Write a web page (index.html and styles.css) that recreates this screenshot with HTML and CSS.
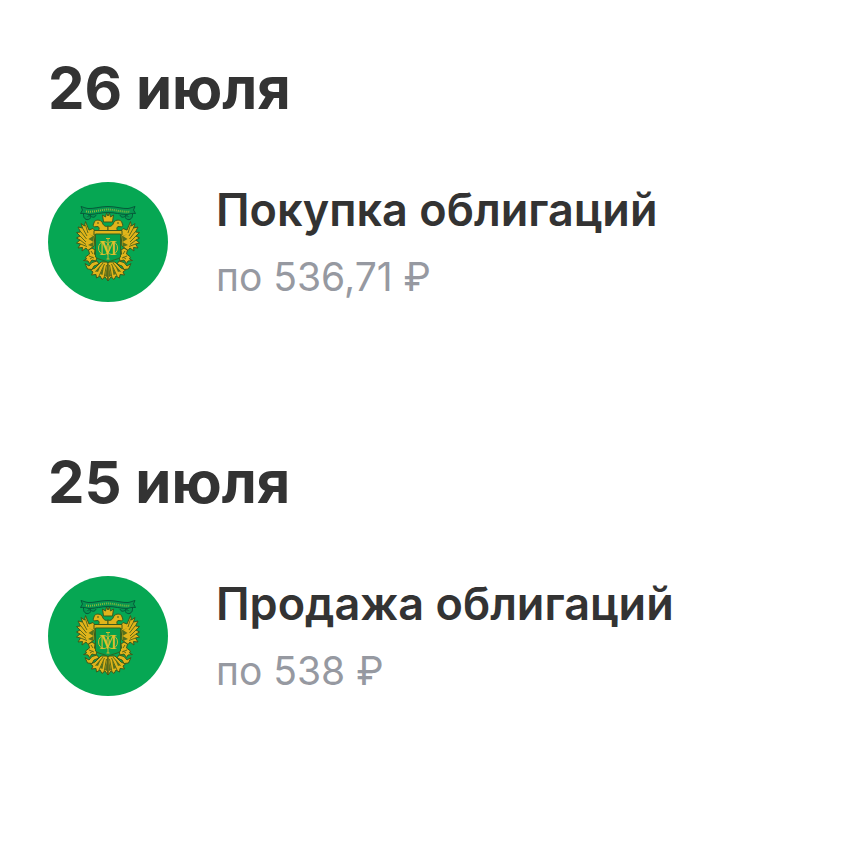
FILE: index.html
```html
<!DOCTYPE html>
<html lang="ru">
<head>
    <meta charset="UTF-8">
    <meta name="viewport" content="width=device-width, initial-scale=1">
    <title>История операций</title>
    <link rel="stylesheet" href="styles.css">
</head>
<body>

<svg class="sprite" aria-hidden="true">
    <defs>
        <!-- left half of the emblem, mirrored for the right one -->
        <g id="crest-half">
            <!-- ribbon -->
            <path class="ribbon" d="M60 24.500C52 24.500 45 27 40 26.500C37 26 35 25 33 24.500L34.500 28L32.500 31.500C36 31 38 32 41 32.500C48 32.500 53 30.500 60 30.500"/>
            <path class="ribbon" d="M35.500 32C35 36 38 39 41.500 37C44 35 42 32.500 39.500 34.500"/>
            <path class="ribbon" d="M42 33C44 36 47 36 48 33"/>
            <!-- head -->
            <path class="gold" d="M45 43.500L46.500 39.500C49 37 53.500 38 54.500 41C55.500 44 58 45 60 44V50H48C51.500 48.500 52 46 50 44.500L46.500 44.800Z"/>
            <circle class="dot" cx="50" cy="41" r="0.800"/>
            <!-- wing -->
            <path class="gold" d="M49 51L45 46.500L41 48L37.500 39.500L36.500 44L33 41.500L34.500 46L30 45L32.500 50L28.500 50.500L32 54L28.500 56L32 58L28.500 61L32.500 62L30 66L34.500 65.500L34 69L38 66L40 68.500L46 64L47 53Z"/>
            <path class="line" d="M37.500 43L40 51M34.500 46L39 54M33 50L38.500 57M32 54L38 60M32 58L38 62.500M32.500 62L39 64.500"/>
            <path class="leaf" d="M40 52L45 54L40.500 57L45.500 60L40 63L45 65L46 54Z"/>
            <!-- supporter -->
            <path class="gold" d="M44 66L40.500 68L41.500 72L37.500 75L38.500 77L35.500 78.500L40 79L41.500 81.500L44 78L48 79L49 75L46.500 72L47 68Z"/>
            <path class="line" d="M43 69L45 72M41 74L46 76M42 77L45 75"/>
            <!-- claw -->
            <path class="gold" d="M49 79L44 80.500L41 84L37 81.500L39.500 87L44 87.500L46 84L51 82Z"/>
            <!-- tail -->
            <path class="gold" d="M60 80H53L47 86L42.500 88L45 90L43.500 93L48 92.500L48.500 96L52 94L54 97.500L57 95L60 99Z"/>
            <path class="line" d="M55 81L47.500 90M56.500 82L51 94M58.500 83L56 96M60 82V98"/>
            <path class="leaf" d="M56 84L52 92L54.500 93ZM58.800 85L57 94L59 95ZM53 83L47.500 89L50 90Z"/>
        </g>
        <symbol id="crest" viewBox="0 0 120 120">
            <use href="#crest-half"/>
            <use href="#crest-half" transform="translate(120 0) scale(-1 1)"/>
            <path class="motto" d="M38 29.500C46 30.500 53 27.500 60 27.500C67 27.500 74 30.500 82 29.500"/>
            <path class="gold" d="M55.500 40L54.500 33L57.500 35L58.500 31L60 34L61.500 31L62.500 35L65.500 33L64.500 40Z"/>
            <path class="gold" d="M46 48.500H74V53H46Z"/>
            <path class="shield" d="M47.500 52H72.500V75C70 78 64 77.500 60 80.500C56 77.500 50 78 47.500 75Z"/>
            <g class="device">
                <ellipse cx="56" cy="66" rx="5.500" ry="6.500"/>
                <ellipse cx="64" cy="66" rx="5.500" ry="6.500"/>
                <path d="M60 57V77M58 56.500H62M58.500 77H61.500"/>
            </g>
            <text class="monogram" x="60" y="73">М</text>
        </symbol>
    </defs>
</svg>

<main class="history">
    <section class="day">
        <h2 class="date">26 июля</h2>
        <article class="operation">
            <svg class="logo" role="img" aria-label="Министерство финансов"><use href="#crest"/></svg>
            <div class="info">
                <h3 class="title">Покупка облигаций</h3>
                <p class="price">по 536,71 ₽</p>
            </div>
        </article>
    </section>

    <section class="day">
        <h2 class="date">25 июля</h2>
        <article class="operation">
            <svg class="logo" role="img" aria-label="Министерство финансов"><use href="#crest"/></svg>
            <div class="info">
                <h3 class="title">Продажа облигаций</h3>
                <p class="price">по 538 ₽</p>
            </div>
        </article>
    </section>
</main>

</body>
</html>
```
FILE: styles.css
```css
body {
    margin: 0;
    background: #fff;
    color: #333;
    font-family: Inter, "Liberation Sans", sans-serif;
}

.sprite {
    display: block;
    width: 0;
    height: 0;
}

.history {
    display: flex;
    flex-direction: column;
    gap: 144px;
    padding: 52px 48px;
}

.date {
    margin: 0 0 58px;
    font-size: 58px;
    font-weight: 700;
    line-height: 72px;
}

.operation {
    display: flex;
    align-items: center;
    gap: 48px;
}

.logo {
    flex: none;
    width: 120px;
    height: 120px;
    border-radius: 50%;
    background: #06a753;
}

.title {
    margin: 0 0 14px;
    font-size: 45px;
    font-weight: 600;
    line-height: 56px;
}

.price {
    margin: 0;
    color: #9699a1;
    font-size: 39px;
    line-height: 50px;
}

/* emblem */
.gold {
    fill: #e0b41b;
    stroke: #3c5a1c;
    stroke-width: 1;
    stroke-linejoin: round;
}

.line {
    fill: none;
    stroke: #5f6a17;
    stroke-width: 1;
}

.leaf {
    fill: #55701d;
}

.dot {
    fill: #30501c;
}

.ribbon {
    fill: #079650;
    stroke: #07593a;
    stroke-width: 1;
}

.motto {
    fill: none;
    stroke: #83b83b;
    stroke-width: 2;
    stroke-dasharray: 1 1;
}

.shield {
    fill: #07a04c;
    stroke: #31651f;
    stroke-width: 1;
}

.device {
    fill: none;
    stroke: #cdbb2c;
    stroke-width: 1;
}

.monogram {
    fill: #dfc12b;
    font-family: "Liberation Serif", serif;
    font-size: 20px;
    text-anchor: middle;
}
```
